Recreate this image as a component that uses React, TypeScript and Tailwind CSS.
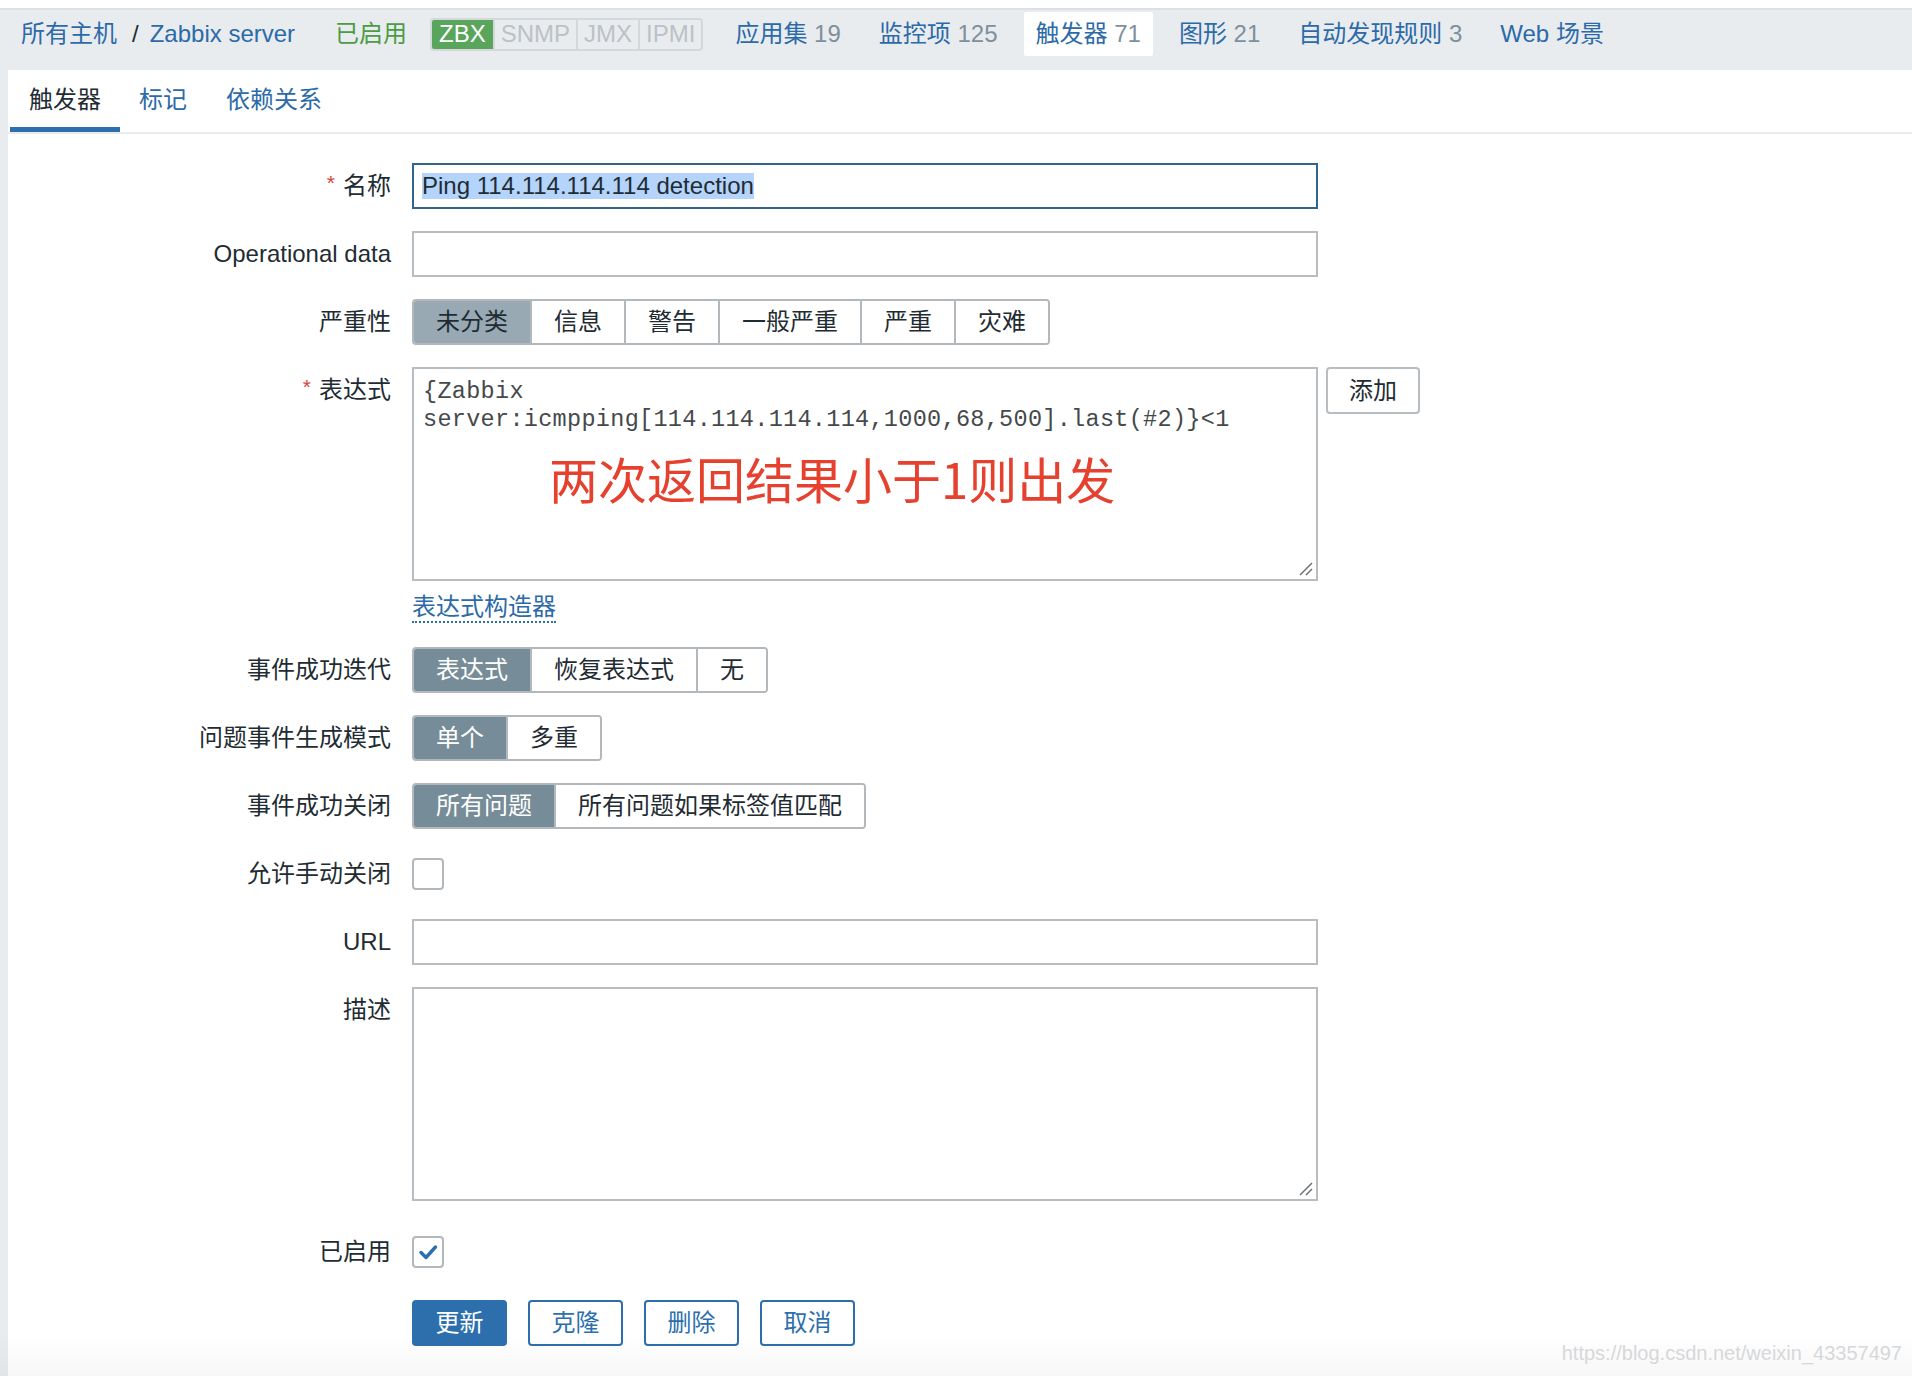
import { ReactNode } from "react";
import clsx from "clsx";

// Zabbix trigger edit form (2x retina screenshot), blue theme

const LINK = "text-[#2c6aa8]";
const COUNT = "text-[#7d909b]";

type RowProps = {
  label?: string;
  required?: boolean;
  className?: string;
  children: ReactNode;
};

function Row({ label, required, className, children }: RowProps) {
  return (
    <div className={clsx("flex gap-[21px]", className)}>
      <div className="w-[383px] shrink-0 h-[46px] flex items-center justify-end text-[#1f2c33]">
        {required && (
          <span className="relative -top-[3px] mr-[8px] text-[21px] text-[#d9453d]">*</span>
        )}
        {label}
      </div>
      <div className="flex items-start">{children}</div>
    </div>
  );
}

function Segmented({
  items,
  active,
  activeCls,
}: {
  items: string[];
  active: number;
  activeCls: string;
}) {
  return (
    <div className="flex h-[46px] rounded-[4px] border-2 border-[#b3b8bc] overflow-hidden">
      {items.map((t, i) => (
        <div
          key={t}
          className={clsx(
            "flex items-center px-[22px]",
            i > 0 && "border-l-2 border-[#b3b8bc]",
            i === active ? activeCls : "bg-white text-[#1f2c33]"
          )}
        >
          {t}
        </div>
      ))}
    </div>
  );
}

function ResizeHandle() {
  return (
    <svg className="absolute right-[3px] bottom-[3px]" width="16" height="16" viewBox="0 0 16 16">
      <line x1="15" y1="3" x2="3" y2="15" stroke="#6b6f72" strokeWidth="1.4" />
      <line x1="15" y1="9" x2="9" y2="15" stroke="#6b6f72" strokeWidth="1.4" />
    </svg>
  );
}

function Checkbox({ checked }: { checked?: boolean }) {
  return (
    <div className="w-[32px] h-[32px] rounded-[4px] border-2 border-[#b3b8bc] bg-white flex items-center justify-center">
      {checked && (
        <svg width="22" height="22" viewBox="0 0 22 22">
          <path d="M4 11.5 L9 16.5 L18.5 6" fill="none" stroke="#2d6fad" strokeWidth="3.4" strokeLinecap="round" strokeLinejoin="round" />
        </svg>
      )}
    </div>
  );
}

function NavItem({ name, count, active }: { name: string; count?: string; active?: boolean }) {
  return (
    <div
      className={clsx(
        "h-[44px] px-[12px] flex items-center whitespace-pre rounded-[2px]",
        active && "bg-white"
      )}
    >
      <span className={LINK}>{name}</span>
      {count && <span className={COUNT}>{" " + count}</span>}
    </div>
  );
}

export default function App() {
  return (
    <div className="relative w-[1912px] h-[1376px] overflow-hidden bg-[#e9ecef] text-[24px] font-['Liberation_Sans','Noto_Sans_CJK_SC',sans-serif]">
      <div className="h-[8px] bg-white" />
      <div className="h-[2px] bg-[#dcdfe3]" />

      {/* host navigation */}
      <div className="h-[60px] flex items-start pt-[2px]">
        <div className="h-[44px] flex items-center pl-[21px] whitespace-pre">
          <span className={LINK}>所有主机</span>
          <span className="ml-[15px] text-[#1f2c33]">/</span>
          <span className={clsx("ml-[11px]", LINK)}>Zabbix server</span>
          <span className="ml-[40px] text-[#4b9c45]">已启用</span>
          <div className="ml-[23px] h-[33px] flex rounded-[4px] border-2 border-[#d4d8db] overflow-hidden leading-none">
            <span className="px-[7px] flex items-center bg-[#58a55b] text-white">ZBX</span>
            <span className="px-[6px] flex items-center border-l-2 border-[#d4d8db] text-[#bcc1c5]">SNMP</span>
            <span className="px-[6px] flex items-center border-l-2 border-[#d4d8db] text-[#bcc1c5]">JMX</span>
            <span className="px-[6px] flex items-center border-l-2 border-[#d4d8db] text-[#bcc1c5]">IPMI</span>
          </div>
        </div>
        <div className="ml-[20px] flex gap-[14px]">
          <NavItem name="应用集" count="19" />
          <NavItem name="监控项" count="125" />
          <NavItem name="触发器" count="71" active />
          <NavItem name="图形" count="21" />
          <NavItem name="自动发现规则" count="3" />
          <NavItem name="Web 场景" />
        </div>
      </div>

      {/* content card */}
      <div className="ml-[8px] h-[1306px] bg-white">
        <div className="flex pl-[2px] border-b-2 border-[#e9ecef]">
          <div className="h-[62px] pt-[3px] px-[19px] flex items-center border-b-[5px] border-[#2d6fad] text-[#1f2c33]">
            触发器
          </div>
          <div className={clsx("h-[62px] pt-[3px] px-[19px] flex items-center border-b-[5px] border-transparent", LINK)}>
            标记
          </div>
          <div className={clsx("h-[62px] pt-[3px] px-[20px] flex items-center border-b-[5px] border-transparent", LINK)}>
            依赖关系
          </div>
        </div>

        <div className="pt-[29px] flex flex-col gap-[22px]">
          <Row label="名称" required>
            <div className="w-[906px] h-[46px] border-2 border-[#33648c] pl-[8px] flex items-center">
              <span className="bg-[#b4d4fb] leading-[26px] text-[#1f2c33]">Ping 114.114.114.114 detection</span>
            </div>
          </Row>

          <Row label="Operational data">
            <div className="w-[906px] h-[46px] border-2 border-[#b8bdc1]" />
          </Row>

          <Row label="严重性">
            <Segmented
              items={["未分类", "信息", "警告", "一般严重", "严重", "灾难"]}
              active={0}
              activeCls="bg-[#98a9b3] text-[#1f2c33]"
            />
          </Row>

          <Row label="表达式" required>
            <div className="flex gap-[8px]">
              <div className="flex flex-col items-start">
                <div className="relative w-[906px] h-[214px] border-2 border-[#b8bdc1] px-[9px] pt-[9px] font-['Liberation_Mono',monospace] text-[23.5px] tracking-[0.3px] leading-[28px] text-[#45494c]">
                  <div>{"{Zabbix"}</div>
                  <div>{"server:icmpping[114.114.114.114,1000,68,500].last(#2)}<1"}</div>
                  <div className="absolute left-[135px] top-[84px] tracking-normal font-['Noto_Sans_CJK_SC',sans-serif] text-[49px] leading-[49px] text-[#e5412e] whitespace-nowrap">
                    两次返回结果小于1则出发
                  </div>
                  <ResizeHandle />
                </div>
                <span className={clsx("mt-[12px] leading-[28px] border-b-2 border-dotted border-[#2d6fad]", LINK)}>
                  表达式构造器
                </span>
              </div>
              <div className="w-[94px] h-[47px] rounded-[4px] border-2 border-[#b8bdc1] flex items-center justify-center text-[#1f2c33]">
                添加
              </div>
            </div>
          </Row>

          <Row label="事件成功迭代" className="mt-[2px]">
            <Segmented items={["表达式", "恢复表达式", "无"]} active={0} activeCls="bg-[#768d99] text-white" />
          </Row>

          <Row label="问题事件生成模式">
            <Segmented items={["单个", "多重"]} active={0} activeCls="bg-[#768d99] text-white" />
          </Row>

          <Row label="事件成功关闭">
            <Segmented
              items={["所有问题", "所有问题如果标签值匹配"]}
              active={0}
              activeCls="bg-[#768d99] text-white"
            />
          </Row>

          <Row label="允许手动关闭">
            <div className="h-[46px] flex items-center">
              <Checkbox />
            </div>
          </Row>

          <Row label="URL">
            <div className="w-[906px] h-[46px] border-2 border-[#b8bdc1]" />
          </Row>

          <Row label="描述">
            <div className="relative w-[906px] h-[214px] border-2 border-[#b8bdc1]">
              <ResizeHandle />
            </div>
          </Row>

          <Row label="已启用" className="mt-[6px]">
            <div className="h-[46px] flex items-center">
              <Checkbox checked />
            </div>
          </Row>

          <Row className="mt-[3px]">
            <div className="flex gap-[21px]">
              <div className="w-[95px] h-[46px] rounded-[4px] bg-[#2d6fad] text-white flex items-center justify-center">
                更新
              </div>
              {["克隆", "删除", "取消"].map((t) => (
                <div
                  key={t}
                  className="w-[95px] h-[46px] rounded-[4px] border-2 border-[#2d6fad] text-[#2d6fad] flex items-center justify-center"
                >
                  {t}
                </div>
              ))}
            </div>
          </Row>
        </div>
      </div>

      {/* screenshot shading + watermark */}
      <div className="absolute left-0 right-0 bottom-0 h-[44px] bg-gradient-to-b from-transparent to-[#00000008] pointer-events-none" />
      <div className="absolute right-[10px] bottom-[8px] text-[20px] text-[#d6d8da] whitespace-nowrap">
        https://blog.csdn.net/weixin_43357497
      </div>
    </div>
  );
}
